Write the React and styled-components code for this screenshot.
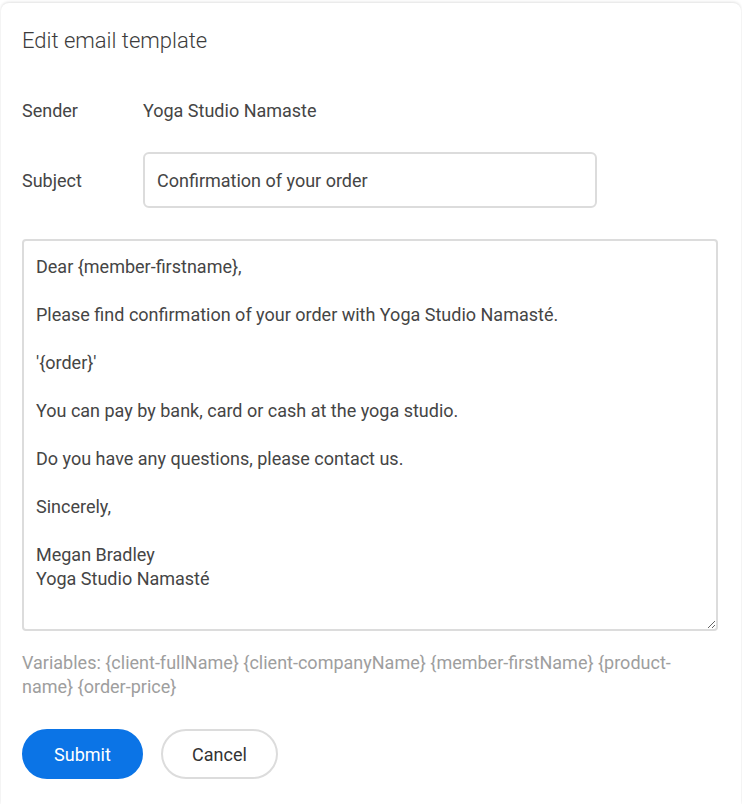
import React from 'react'
import styled, { createGlobalStyle } from 'styled-components'

const GlobalStyle = createGlobalStyle`
  body {
    margin: 0;
    background: #ffffff;
    font-family: Roboto, 'Liberation Sans', Arial, sans-serif;
    color: #454545;
  }
`
const Card = styled.div`
  margin: 3px 1px 0 1px;
  background: #ffffff;
  border-radius: 8px 8px 0 0;
  box-shadow: 0 -1px 3px rgba(0, 0, 0, 0.12);
  padding: 24px 23px 26px 21px;
  box-sizing: border-box;
  min-height: 801px;
`
const Title = styled.h1`
  margin: 0;
  font-size: 22px;
  line-height: 28px;
  font-weight: 300;
  color: #3c3c3c;
`
const Form = styled.form`
  margin-top: 27px;
  display: flex;
  flex-direction: column;
`
const Row = styled.div`
  display: grid;
  grid-template-columns: 121px 454px;
  align-items: center;
  height: 56px;
  margin-bottom: ${props => props.gap || 0}px;
`
const Label = styled.span`
  font-size: 18px;
  color: #454545;
`
const Value = styled.span`
  font-size: 18px;
  color: #454545;
`
const Input = styled.input`
  box-sizing: border-box;
  width: 100%;
  height: 56px;
  border: 2px solid #dcdcdc;
  border-radius: 6px;
  padding: 0 12px;
  font-family: inherit;
  font-size: 18px;
  color: #454545;
  outline: none;
`
const Body = styled.textarea`
  box-sizing: border-box;
  margin-top: 31px;
  width: 696px;
  height: 392px;
  border: 2px solid #dcdcdc;
  border-radius: 4px;
  padding: 14px 12px;
  font-family: inherit;
  font-size: 18px;
  line-height: 24px;
  color: #454545;
  outline: none;
`
const Hint = styled.p`
  margin: 20px 0 0;
  font-size: 18px;
  line-height: 24px;
  color: #9e9e9e;
  width: 696px;
`
const Actions = styled.div`
  display: flex;
  gap: 18px;
  margin-top: 30px;
`
const Button = styled.button`
  box-sizing: border-box;
  height: 50px;
  width: ${props => props.w}px;
  border-radius: 25px;
  font-family: inherit;
  font-size: 18px;
  cursor: pointer;
  border: 2px solid ${props => (props.primary ? '#0b74e6' : '#dcdcdc')};
  background: ${props => (props.primary ? '#0b74e6' : '#ffffff')};
  color: ${props => (props.primary ? '#ffffff' : '#333333')};
`

const template = `Dear {member-firstname},

Please find confirmation of your order with Yoga Studio Namasté.

'{order}'

You can pay by bank, card or cash at the yoga studio.

Do you have any questions, please contact us.

Sincerely,

Megan Bradley
Yoga Studio Namasté`

const variables =
  'Variables: {client-fullName} {client-companyName} {member-firstName} {product-name} {order-price}'

export default function App() {
  return (
    <>
      <GlobalStyle />
      <Card>
        <Title>Edit email template</Title>
        <Form onSubmit={e => e.preventDefault()}>
          <Row gap={14}>
            <Label>Sender</Label>
            <Value>Yoga Studio Namaste</Value>
          </Row>
          <Row>
            <Label>Subject</Label>
            <Input defaultValue="Confirmation of your order" />
          </Row>
          <Body defaultValue={template} />
          <Hint>{variables}</Hint>
          <Actions>
            <Button primary w={121} type="submit">
              Submit
            </Button>
            <Button w={117} type="button">
              Cancel
            </Button>
          </Actions>
        </Form>
      </Card>
    </>
  )
}
